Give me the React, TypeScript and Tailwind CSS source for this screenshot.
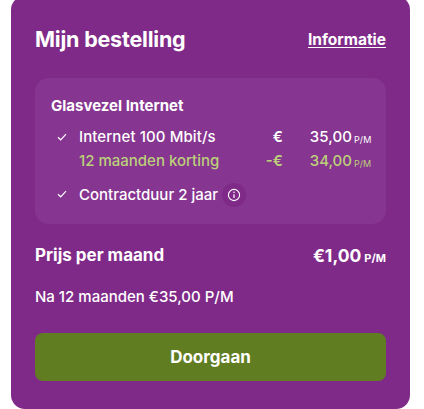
import React from "react";

const Check = ({ className = "" }: { className?: string }) => (
  <svg width="10" height="8" viewBox="0 0 10 8" fill="none" className={className}>
    <path d="M1 4.2 L3.7 6.8 L9 1.2" stroke="#fff" strokeWidth="1.2" />
  </svg>
);

export default function App() {
  return (
    <div className="w-[424px] h-[409px] overflow-hidden bg-white font-['Inter',sans-serif] text-white">
      <div className="ml-[11px] mt-[-4px] w-[399px] h-[413px] rounded-[14px] bg-[#7f2a88] px-6 pt-[28px]">
        <div className="flex items-center justify-between h-[30px]">
          <h1 className="mt-[1px] text-[21.5px] font-bold tracking-[-0.2px]">Mijn bestelling</h1>
          <a className="mt-[1px] text-[15.5px] font-bold underline underline-offset-2">Informatie</a>
        </div>
        <div className="mt-[24px] h-[146px] rounded-[14px] bg-[#863590] pl-[16px] pr-[16px] pt-[19px]">
          <div className="text-[15px] font-bold leading-[17px]">Glasvezel Internet</div>
          <div className="mt-[11px] flex h-[24px] items-center text-[15px] font-medium tracking-[0.1px]">
            <Check className="ml-[6px] mr-[12px]" />
            <span className="flex-1">Internet 100 Mbit/s</span>
            <span className="font-semibold">€</span>
            <span className="ml-[24px] w-[45px] text-right font-medium">35,00</span>
            <span className="ml-[2px] w-[16px] text-[9px] font-normal mt-[5px]">P/M</span>
          </div>
          <div className="flex h-[25px] items-center text-[15px] font-medium text-[#bcd07a]">
            <span className="w-[28px]" />
            <span className="flex-1">12 maanden korting</span>
            <span className="font-semibold">-€</span>
            <span className="ml-[24px] w-[45px] text-right font-medium">34,00</span>
            <span className="ml-[2px] w-[16px] text-[9px] font-normal mt-[5px]">P/M</span>
          </div>
          <div className="mt-[9px] flex h-[24px] items-center text-[15px] font-medium">
            <Check className="ml-[6px] mr-[12px] mb-[3px]" />
            <span>Contractduur 2 jaar</span>
            <span className="ml-[4px] flex h-[24px] w-[24px] items-center justify-center rounded-full bg-[#7f2a88]">
              <svg width="14" height="14" viewBox="0 0 14 14" fill="none">
                <circle cx="7" cy="7" r="5.6" stroke="#fff" strokeWidth="1.1" />
                <path d="M7 6.2 V10" stroke="#fff" strokeWidth="1.2" />
                <circle cx="7" cy="4.3" r="0.8" fill="#fff" />
              </svg>
            </span>
          </div>
        </div>
        <div className="mt-[20px] flex items-center justify-between h-[24px]">
          <span className="text-[17px] font-bold">Prijs per maand</span>
          <span className="flex items-baseline font-bold">
            <span className="text-[17.5px]">€1,00</span>
            <span className="ml-[3px] text-[11px]">P/M</span>
          </span>
        </div>
        <div className="mt-[17px] h-[24px] text-[15px] font-medium leading-[24px]">Na 12 maanden €35,00 P/M</div>
        <button className="mt-[24px] h-[48px] w-full rounded-[8px] bg-[#617d22] pt-[1px] text-[17px] font-bold text-white">Doorgaan</button>
      </div>
    </div>
  );
}
